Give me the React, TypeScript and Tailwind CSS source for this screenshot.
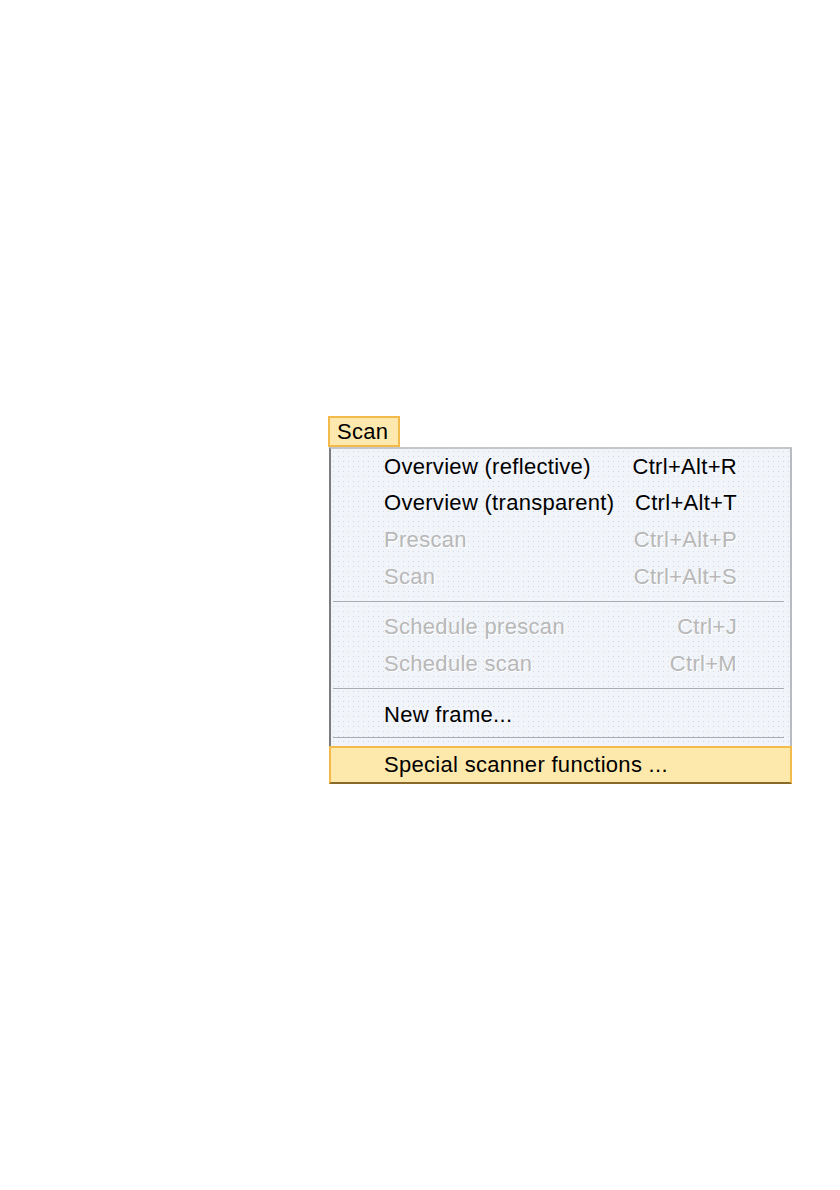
import React from 'react';

type Item = { label: string; shortcut?: string; disabled?: boolean; h: string };

const groups: { items: Item[]; sep: string }[] = [
  {
    items: [
      { label: 'Overview (reflective)', shortcut: 'Ctrl+Alt+R', h: 'h-[36px]' },
      { label: 'Overview (transparent)', shortcut: 'Ctrl+Alt+T', h: 'h-[36px]' },
      { label: 'Prescan', shortcut: 'Ctrl+Alt+P', disabled: true, h: 'h-[37px]' },
      { label: 'Scan', shortcut: 'Ctrl+Alt+S', disabled: true, h: 'h-[37px]' },
    ],
    sep: 'h-[13px] pt-[6px]',
  },
  {
    items: [
      { label: 'Schedule prescan', shortcut: 'Ctrl+J', disabled: true, h: 'h-[37px]' },
      { label: 'Schedule scan', shortcut: 'Ctrl+M', disabled: true, h: 'h-[37px]' },
    ],
    sep: 'h-[14px] pt-[6px]',
  },
  { items: [{ label: 'New frame...', h: 'h-[38px]' }], sep: 'h-[12px] pt-[3px]' },
];

const MenuRow: React.FC<{ item: Item }> = ({ item }) => (
  <div
    className={`flex items-center justify-between pl-[53px] pr-[53px] ${item.h} ${
      item.disabled ? 'text-[#b8b8b8] [text-shadow:1px_1px_0_#ffffff]' : 'text-black'
    }`}
  >
    <span>{item.label}</span>
    {item.shortcut && <span>{item.shortcut}</span>}
  </div>
);

const Separator: React.FC<{ h: string }> = ({ h }) => (
  <div className={`pl-[2px] pr-[6px] ${h}`}>
    <div className="h-px w-full bg-[#a9acb0]" />
  </div>
);

export default function App() {
  return (
    <div className="min-h-[1190px] w-[840px] bg-white font-['Liberation_Sans',Arial,sans-serif] text-[22px] leading-none tracking-[0.3px]">
      <div className="pl-[328px] pt-[416px]">
        <div className="flex h-[31px] w-[72px] items-center border-2 border-[#f4bb4a] bg-[#fde9ad] pl-[7px] text-black">
          Scan
        </div>
        <div className="ml-px w-[463px] border-2 border-t-[#c4c6ca] border-r-[#b8bbbf] border-b-[#5a5a5a] border-l-[#7a7c80] bg-[#f1f4f9] bg-[radial-gradient(#d2d8e1_0.7px,transparent_1px)] bg-[size:5px_5px]">
          {groups.map((g, gi) => (
            <div key={gi}>
              {g.items.map((item) => (
                <MenuRow key={item.label} item={item} />
              ))}
              <Separator h={g.sep} />
            </div>
          ))}
          <div className="-mx-[2px] -mb-[2px] flex h-[38px] items-center border-2 border-[#f4bb4a] border-b-[#8a6a2a] bg-[#fee9ad] pl-[53px] text-black">
            Special scanner functions ...
          </div>
        </div>
      </div>
    </div>
  );
}
